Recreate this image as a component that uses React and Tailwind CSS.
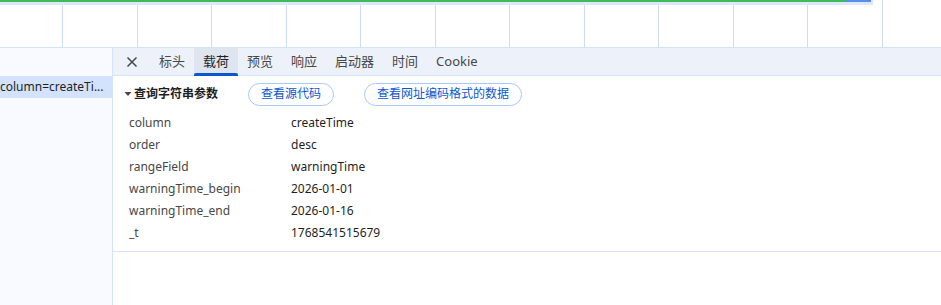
import React from "react";

const tabs = ["标头", "载荷", "预览", "响应", "启动器", "时间", "Cookie"];

const params = [
  ["column", "createTime"],
  ["order", "desc"],
  ["rangeField", "warningTime"],
  ["warningTime_begin", "2026-01-01"],
  ["warningTime_end", "2026-01-16"],
  ["_t", "1768541515679"],
];

const font = { fontFamily: '"Noto Sans", "Noto Sans CJK SC", sans-serif' };

export default function App() {
  return (
    <div className="w-[941px] h-[305px] bg-white overflow-hidden text-[12px] text-[#474747]" style={font}>
      {/* overview strip */}
      <div className="relative h-[48px] border-b border-[#d6e2fb] flex">
        <div className="w-[62px] shrink-0" />
        {[...Array(12)].map((_, i) => (
          <div key={i} className="w-[74.5px] shrink-0 border-l border-[#cfdcf7]" />
        ))}
        <div className="absolute left-0 top-0 w-[873px] h-[5px] bg-[#dce7fc]">
          <div className="flex h-[2px]">
            <div className="w-[846px] bg-[#3dba5a]" />
            <div className="w-[25px] bg-[#5b8def]" />
          </div>
        </div>
      </div>

      <div className="flex h-[257px]">
        {/* request list */}
        <div className="w-[113px] shrink-0 bg-[#f8faff] border-r border-[#d6e2fb]">
          <div className="h-[28px]" />
          <div className="h-[22px] bg-[#d3e3fd] flex items-center text-[#1f1f1f] whitespace-nowrap overflow-hidden">
            column=createTi...
          </div>
        </div>

        {/* details */}
        <div className="flex-1 flex flex-col">
          <div className="h-[28px] bg-[#edf2fa] border-b border-[#d3e3fd] flex items-stretch text-[13px] text-[#474747]">
            <div className="w-[37px] flex items-center justify-center">
              <svg width="12" height="12" viewBox="0 0 12 12">
                <path d="M1.5 1.5 L10.5 10.5 M10.5 1.5 L1.5 10.5" stroke="#474747" strokeWidth="1.5" />
              </svg>
            </div>
            {tabs.map((t, i) => (
              <div
                key={t}
                className={
                  "relative flex items-center px-[9px] " +
                  (i === 1 ? "bg-[#dfe5ef] text-[#1f1f1f]" : "")
                }
              >
                {t}
                {i === 1 && (
                  <div className="absolute left-0 right-0 bottom-[-1px] h-[3px] rounded-t-[2px] bg-[#0b57d0]" />
                )}
              </div>
            ))}
          </div>

          <div className="border-b border-[#d6e2fb] pb-[7px]">
            <div className="flex items-center h-[36px] pl-[11px]">
              <svg width="8" height="8" viewBox="0 0 8 8" className="mr-[2px]">
                <path d="M0.5 2 L7.5 2 L4 6 Z" fill="#474747" />
              </svg>
              <span className="font-bold text-[#1f1f1f] text-[12px]">查询字符串参数</span>
              <button className="ml-[30px] h-[23px] px-[12px] rounded-full border border-[#a8c7fa] text-[#0b57d0] text-[12px]">
                查看源代码
              </button>
              <button className="ml-[30px] h-[23px] px-[12px] rounded-full border border-[#a8c7fa] text-[#0b57d0] text-[12px]">
                查看网址编码格式的数据
              </button>
            </div>
            <div className="pl-[16px]">
              {params.map(([k, v]) => (
                <div key={k} className="flex h-[22px] items-center">
                  <div className="w-[162px] text-[#474747]">{k}</div>
                  <div className="text-[#1f1f1f]">{v}</div>
                </div>
              ))}
            </div>
          </div>
        </div>
      </div>
    </div>
  );
}
